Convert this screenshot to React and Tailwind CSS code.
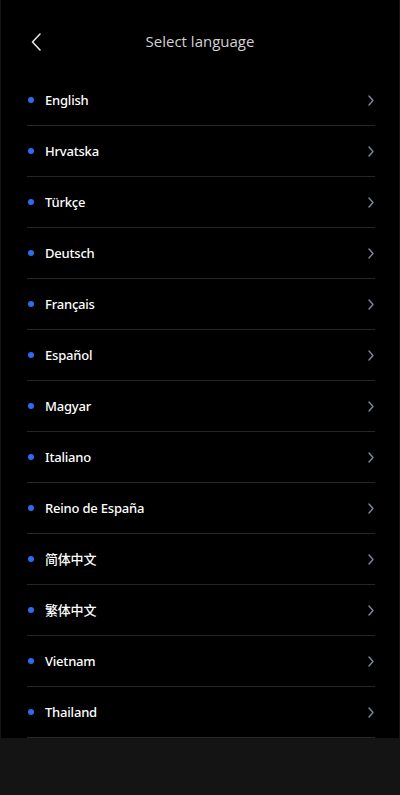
import React from "react";

const langs = [
  "English",
  "Hrvatska",
  "Türkçe",
  "Deutsch",
  "Français",
  "Español",
  "Magyar",
  "Italiano",
  "Reino de España",
  "简体中文",
  "繁体中文",
  "Vietnam",
  "Thailand",
];

export default function App() {
  return (
    <div
      className="min-h-[795px] w-[400px] bg-[#141414]"
      style={{ fontFamily: '"Noto Sans", "Noto Sans CJK SC", sans-serif' }}
    >
      <div className="bg-black mx-[1px]">
        <div className="relative h-[75px] flex justify-center pt-[30px]">
          <button className="absolute left-[28px] top-[33px] w-[14px] h-[18px] flex items-center justify-center">
            <svg width="10" height="18" viewBox="0 0 10 18" fill="none">
              <path d="M9 1L1.5 9L9 17" stroke="#e6e6e6" strokeWidth="1.6" strokeLinecap="round" strokeLinejoin="round" />
            </svg>
          </button>
          <div className="text-[15px] leading-[22px] text-[#d2d2d2]" style={{ fontFamily: '"Open Sans", sans-serif' }}>
            Select language
          </div>
        </div>
        <div className="pl-[26px] pr-[24px]">
          {langs.map((l) => (
            <div key={l} className="h-[51px] flex items-center border-b border-[#262626]">
              <span className="w-[6px] h-[6px] rounded-full bg-[#2f6bf0] ml-[1px]" />
              <span className="ml-[11px] text-[13px] font-medium text-white flex-1 leading-none tracking-[-0.2px]">{l}</span>
              <svg width="6" height="11" viewBox="0 0 6 11" fill="none" className="mr-[1px]">
                <path d="M1 1L5 5.5L1 10" stroke="#7f889b" strokeWidth="1.4" strokeLinecap="round" strokeLinejoin="round" />
              </svg>
            </div>
          ))}
        </div>
      </div>
    </div>
  );
}
